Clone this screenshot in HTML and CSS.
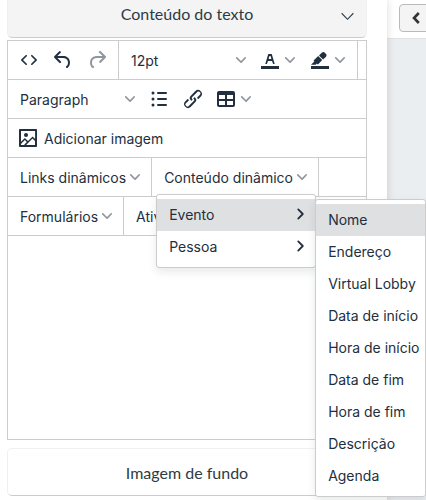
FILE: index.html
```html
<!DOCTYPE html>
<html lang="pt">
<head>
  <meta charset="UTF-8" />
  <meta name="viewport" content="width=device-width, initial-scale=1.0"/>
  <title>Conteúdo do texto</title>
  <link rel="stylesheet" href="styles.css">
</head>
<body>

  <!-- Shared icons -->
  <svg class="sprite" aria-hidden="true">
    <symbol id="chevron-down" viewBox="0 0 10 10"><path d="M8.7 2.2c.3-.3.8-.3 1 0 .4.4.4.9 0 1.2L5.7 7.8c-.3.3-.9.3-1.2 0L.2 3.4a.8.8 0 0 1 0-1.2c.3-.3.8-.3 1.1 0L5 6l3.7-3.8z"/></symbol>
    <symbol id="chevron-right" viewBox="0 0 10 10"><path d="M2.7 1.2L6.5 5 2.7 8.8" fill="none" stroke="currentColor" stroke-width="1.5" stroke-linecap="round" stroke-linejoin="round"/></symbol>
  </svg>

  <div class="layout">
    <div class="sidebar">
      <button class="section-header open">
        Conteúdo do texto
        <svg class="section-arrow" viewBox="0 0 12 8"><path d="M0.6 1l5.4 5.6L11.4 1"/></svg>
      </button>

      <div class="editor">
        <div class="toolbar">
          <div class="group">
            <button class="tool" aria-label="Código fonte"><svg class="icon" viewBox="0 0 24 24"><path d="M9.8 15.7c.3.3.3.8 0 1-.3.4-.9.4-1.2 0l-4.4-4.1a.8.8 0 0 1 0-1.2l4.4-4.2c.3-.3.9-.3 1.2 0 .3.3.3.8 0 1.1L6 12l3.8 3.7zM14.2 15.7c-.3.3-.3.8 0 1 .4.4.9.4 1.2 0l4.4-4.1c.3-.3.3-.9 0-1.2l-4.4-4.2a.8.8 0 0 0-1.2 0c-.3.3-.3.8 0 1.1L18 12l-3.8 3.7z"/></svg></button>
            <button class="tool" aria-label="Desfazer"><svg class="icon" viewBox="0 0 24 24"><path d="M6.4 8H12c3.7 0 6.2 2 6.8 5.1.6 2.7-.4 5.6-2.3 6.8a1 1 0 0 1-1-1.8c1.1-.6 1.8-2.7 1.4-4.6-.5-2.1-2.1-3.5-4.9-3.5H6.4l3.3 3.3a1 1 0 1 1-1.4 1.4l-5-5a1 1 0 0 1 0-1.4l5-5a1 1 0 0 1 1.4 1.4L6.4 8z"/></svg></button>
            <button class="tool" aria-label="Refazer" disabled><svg class="icon" viewBox="0 0 24 24"><path d="M17.6 10H12c-2.8 0-4.4 1.4-4.9 3.5-.4 2 .3 4 1.4 4.6a1 1 0 1 1-1 1.8c-2-1.2-2.9-4.1-2.3-6.8.6-3 3-5.1 6.8-5.1h5.6l-3.3-3.3a1 1 0 1 1 1.4-1.4l5 5a1 1 0 0 1 0 1.4l-5 5a1 1 0 0 1-1.4-1.4l3.3-3.3z"/></svg></button>
          </div>
          <div class="group">
            <div class="select">
              <select aria-label="Tamanho da fonte"><option>12pt</option></select>
              <svg class="chevron"><use href="#chevron-down"/></svg>
            </div>
            <button class="tool split" aria-label="Cor do texto"><svg class="icon" viewBox="0 0 24 24"><path d="M3 18h18v3H3z"/><path d="M8.7 16h-.8a.5.5 0 0 1-.5-.6l2.7-9c.1-.3.3-.4.5-.4h2.8c.2 0 .4.1.5.4l2.7 9a.5.5 0 0 1-.5.6h-.8a.5.5 0 0 1-.4-.4l-.7-2.2c0-.3-.3-.4-.5-.4h-3.4c-.2 0-.4.1-.5.4l-.7 2.2c0 .3-.2.4-.4.4zm2.6-7.6l-.6 2a.5.5 0 0 0 .5.6h1.6a.5.5 0 0 0 .5-.6l-.6-2c0-.3-.3-.4-.5-.4h-.4c-.2 0-.4.1-.5.4z" fill-rule="evenodd"/></svg><svg class="chevron"><use href="#chevron-down"/></svg></button>
            <button class="tool split" aria-label="Cor de fundo"><svg class="icon" viewBox="0 0 24 24"><path d="M3 18h18v3H3z"/><path d="M7.7 16.7H3l3.3-3.3-.7-.8L10.2 8l4 4.1-4 4.2c-.2.2-.6.2-.8 0l-.6-.7-1.1 1.1zm5-7.5L11 7.4l3-2.9a2 2 0 0 1 2.6 0L18 6c.7.7.7 2 0 2.7l-2.9 2.9-1.8-1.8-.5-.6"/></svg><svg class="chevron"><use href="#chevron-down"/></svg></button>
          </div>
        </div>

        <div class="toolbar">
          <div class="group last">
            <div class="select">
              <select aria-label="Formato"><option>Paragraph</option></select>
              <svg class="chevron"><use href="#chevron-down"/></svg>
            </div>
            <button class="tool" aria-label="Lista"><svg class="icon" viewBox="0 0 24 24"><path d="M11 5h8a1 1 0 0 1 0 2h-8a1 1 0 0 1 0-2zm0 6h8a1 1 0 0 1 0 2h-8a1 1 0 0 1 0-2zm0 6h8a1 1 0 0 1 0 2h-8a1 1 0 0 1 0-2z"/><circle cx="6" cy="6" r="1.5"/><circle cx="6" cy="12" r="1.5"/><circle cx="6" cy="18" r="1.5"/></svg></button>
            <button class="tool" aria-label="Link"><svg class="icon" viewBox="0 0 24 24"><path d="M6.2 12.3a1 1 0 0 1 1.4 1.4l-2.1 2a2 2 0 1 0 2.7 2.8l4.8-4.8a1 1 0 0 0 0-1.4 1 1 0 1 1 1.4-1.3 2.9 2.9 0 0 1 0 4L9.6 20a3.9 3.9 0 0 1-5.5-5.5l2-2zm11.6-.6a1 1 0 0 1-1.4-1.4l2-2a2 2 0 1 0-2.6-2.8L11 10.3a1 1 0 0 0 0 1.4A1 1 0 1 1 9.6 13a2.9 2.9 0 0 1 0-4L14.4 4a3.9 3.9 0 0 1 5.5 5.5l-2 2z"/></svg></button>
            <button class="tool with-menu" aria-label="Tabela"><svg class="icon" viewBox="0 0 24 24"><path fill-rule="evenodd" d="M19 4a2 2 0 0 1 2 2v12a2 2 0 0 1-2 2H5a2 2 0 0 1-2-2V6c0-1.1.9-2 2-2h14zM5 14v4h6v-4H5zm14 0h-6v4h6v-4zm0-6h-6v4h6V8zM5 12h6V8H5v4z"/></svg><svg class="chevron"><use href="#chevron-down"/></svg></button>
          </div>
        </div>

        <div class="toolbar">
          <div class="group last">
            <button class="tool with-text"><svg class="icon" viewBox="0 0 24 24"><path fill-rule="evenodd" d="M5 15.7l3.3-3.2c.3-.3.7-.3 1 0L12 15l4.1-4c.3-.4.8-.4 1 0l2 1.9V5H5v10.7zM5 18V19h3l2.8-2.9-2-2L5 17.9zm14-3l-2.5-2.4-6.4 6.5H19v-4zM4 3h16c.6 0 1 .4 1 1v16c0 .6-.4 1-1 1H4a1 1 0 0 1-1-1V4c0-.6.4-1 1-1z"/><circle cx="10" cy="9" r="2"/></svg>Adicionar imagem</button>
          </div>
        </div>

        <div class="toolbar">
          <div class="group">
            <button class="menu-button">Links dinâmicos<svg class="chevron"><use href="#chevron-down"/></svg></button>
          </div>
          <div class="group">
            <div class="dropdown">
              <button class="menu-button" aria-expanded="true">Conteúdo dinâmico<svg class="chevron"><use href="#chevron-down"/></svg></button>
              <ul class="menu">
                <li>
                  <button class="item active">Evento<svg class="arrow"><use href="#chevron-right"/></svg></button>
                  <ul class="menu submenu">
                    <li><button class="item active">Nome</button></li>
                    <li><button class="item">Endereço</button></li>
                    <li><button class="item">Virtual Lobby</button></li>
                    <li><button class="item">Data de início</button></li>
                    <li><button class="item">Hora de início</button></li>
                    <li><button class="item">Data de fim</button></li>
                    <li><button class="item">Hora de fim</button></li>
                    <li><button class="item">Descrição</button></li>
                    <li><button class="item">Agenda</button></li>
                  </ul>
                </li>
                <li><button class="item">Pessoa<svg class="arrow"><use href="#chevron-right"/></svg></button></li>
              </ul>
            </div>
          </div>
        </div>

        <div class="toolbar">
          <div class="group">
            <button class="menu-button">Formulários<svg class="chevron"><use href="#chevron-down"/></svg></button>
          </div>
          <div class="group last">
            <button class="menu-button">Ativ<svg class="chevron"><use href="#chevron-down"/></svg></button>
          </div>
        </div>

        <textarea class="content" aria-label="Conteúdo do texto"></textarea>
      </div>

      <button class="section-header">Imagem de fundo</button>
    </div>

    <div class="preview">
      <div class="preview-bar">
        <button class="back" aria-label="Voltar"><svg viewBox="0 0 8 12"><path d="M6.8 1L2 6l4.8 5"/></svg></button>
      </div>
    </div>
  </div>

</body>
</html>
```
FILE: styles.css
```css
* {
  box-sizing: border-box;
}

body {
  margin: 0;
  color: #222f3e;
  background: #ebeef0;
  font-family: Inter, "Liberation Sans", sans-serif;
  font-size: 14px;
}

button, select, textarea {
  margin: 0;
  padding: 0;
  border: none;
  background: none;
  color: inherit;
  font: inherit;
}

button {
  cursor: pointer;
}

ul {
  list-style: none;
  margin: 0;
  padding: 0;
}

.sprite {
  display: none;
}

.layout {
  display: flex;
  min-height: 100vh;
}

.sidebar {
  position: relative;
  z-index: 1;
  flex: 1;
  padding: 0 20px 4px 7px;
  background: #fff;
  box-shadow: 0 0 8px rgba(0, 0, 0, 0.15);
}

/* Accordion headers */
.section-header {
  display: flex;
  align-items: center;
  justify-content: center;
  position: relative;
  width: 100%;
  height: 48px;
  margin-top: 8px;
  border: 1px solid #f0f0f0;
  border-bottom: 1px solid #ccc;
  border-radius: 5px;
  color: #2d3b45;
  font-family: Lato, sans-serif;
  font-size: 16px;
}

.section-header.open {
  height: 38px;
  margin: 0 0 2px;
  padding-bottom: 10px;
  border-top: none;
  border-radius: 0 0 5px 5px;
  background: #f4f4f4;
}

.section-arrow {
  position: absolute;
  right: 12px;
  top: 12px;
  width: 13px;
  height: 9px;
  fill: none;
  stroke: #2d3b45;
}

/* Editor */
.editor {
  border: 1px solid #ccc;
}

.toolbar {
  display: flex;
  height: 39px;
  border-bottom: 1px solid #ccc;
}

.group {
  display: flex;
  align-items: center;
  padding: 0 4px;
  border-right: 1px solid #ccc;
}

.group.last {
  border-right: none;
}

.tool {
  display: flex;
  align-items: center;
  justify-content: center;
  width: 34px;
  height: 34px;
}

.tool:disabled {
  opacity: 0.5;
}

.tool.split {
  justify-content: flex-start;
  gap: 3px;
  width: 50px;
  padding-left: 5px;
}

.tool.with-menu {
  gap: 3px;
  width: auto;
  padding: 0 4px;
}

.tool.with-text {
  gap: 4px;
  width: auto;
  padding: 0 4px;
}

.icon {
  width: 24px;
  height: 24px;
  fill: #222f3e;
}

.chevron {
  flex: none;
  width: 10px;
  height: 10px;
  fill: #222f3e;
  opacity: 0.5;
}

.select {
  position: relative;
  width: 130px;
}

.select select {
  appearance: none;
  width: 100%;
  height: 34px;
  padding: 0 8px;
}

.select .chevron {
  position: absolute;
  right: 7px;
  top: 12px;
  pointer-events: none;
}

.menu-button {
  display: flex;
  align-items: center;
  gap: 4px;
  height: 34px;
  padding: 0 7px 0 8px;
  white-space: nowrap;
}

.content {
  display: block;
  width: 100%;
  height: 203px;
  resize: none;
}

/* Menus */
.dropdown {
  position: relative;
}

.menu {
  position: absolute;
  top: 100%;
  left: 0;
  z-index: 2;
  width: 160px;
  padding: 4px 0;
  border: 1px solid #ccc;
  border-radius: 3px;
  background: #fff;
  box-shadow: 0 4px 8px rgba(34, 47, 62, 0.1);
}

.menu li {
  position: relative;
}

.submenu {
  top: 0;
  left: 100%;
  width: 111px;
}

.item {
  display: flex;
  align-items: center;
  justify-content: space-between;
  width: 100%;
  height: 32px;
  padding: 0 8px 2px 12px;
  white-space: nowrap;
}

.item.active {
  background: #dee0e2;
}

.arrow {
  width: 12px;
  height: 12px;
}

/* Preview */
.preview {
  flex: 0 0 39px;
  overflow: hidden;
}

.preview-bar {
  height: 39px;
  padding: 4px 0 0 12px;
  border-bottom: 1px solid #e0e3e5;
  background: #fff;
}

.back {
  display: flex;
  align-items: center;
  width: 44px;
  height: 28px;
  padding-left: 12px;
  border: 1px solid #bbb;
  border-radius: 4px;
  background: #f4f4f4;
}

.back svg {
  width: 8px;
  height: 12px;
  fill: none;
  stroke: #333;
  stroke-width: 2.6;
}
```
